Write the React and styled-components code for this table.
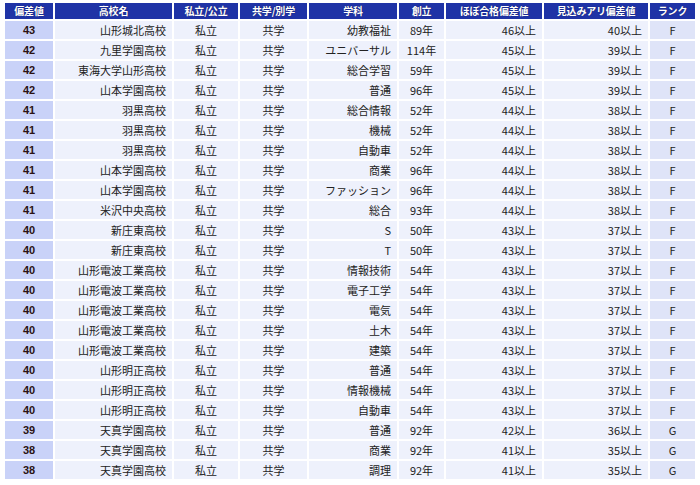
import React from "react";
import styled, { createGlobalStyle } from "styled-components";

const Global = createGlobalStyle`
  html, body { margin: 0; padding: 0; background: #ffffff; }
  body { font-family: "Noto Sans CJK JP", "Liberation Sans", sans-serif; }
`;

const Wrap = styled.div`
  padding: 1px 0 0 3px;
`;

const Table = styled.table`
  border-collapse: separate;
  border-spacing: 2px;
  table-layout: fixed;
  width: 692px;
`;

const HeadCell = styled.th`
  background: #1f33a6;
  color: #ffffff;
  font-size: 10px;
  font-weight: 700;
  height: 16px;
  padding: 0;
  line-height: 16px;
  text-align: center;
  white-space: nowrap;
  text-shadow: 0 0 1px #0a1050;
  letter-spacing: -0.2px;
`;

const Cell = styled.td`
  height: 18px;
  padding: 0 ${(p) => (p.$align === "right" ? "6px" : "0")} 0 0;
  line-height: 18px;
  font-size: 11px;
  color: #222222;
  white-space: nowrap;
  text-align: ${(p) => p.$align || "center"};
  background: ${(p) =>
    p.$kind === "score" ? "#c9d2f8" : p.$kind === "rank" ? "#dfe4f8" : "#eef1fc"};
`;

const Score = styled(Cell)`
  font-weight: 700;
  color: #2b1212;
  font-family: "Liberation Sans", "Noto Sans CJK JP", sans-serif;
  font-size: 11px;
`;

const widths = [48, 117, 64, 67, 88, 45, 96, 104, 45];
const headers = ["偏差値", "高校名", "私立/公立", "共学/別学", "学科", "創立", "ほぼ合格偏差値", "見込みアリ偏差値", "ランク"];

const rows = [
  ["43", "山形城北高校", "幼教福祉", "89年", "46以上", "40以上", "F"],
  ["42", "九里学園高校", "ユニバーサル", "114年", "45以上", "39以上", "F"],
  ["42", "東海大学山形高校", "総合学習", "59年", "45以上", "39以上", "F"],
  ["42", "山本学園高校", "普通", "96年", "45以上", "39以上", "F"],
  ["41", "羽黒高校", "総合情報", "52年", "44以上", "38以上", "F"],
  ["41", "羽黒高校", "機械", "52年", "44以上", "38以上", "F"],
  ["41", "羽黒高校", "自動車", "52年", "44以上", "38以上", "F"],
  ["41", "山本学園高校", "商業", "96年", "44以上", "38以上", "F"],
  ["41", "山本学園高校", "ファッション", "96年", "44以上", "38以上", "F"],
  ["41", "米沢中央高校", "総合", "93年", "44以上", "38以上", "F"],
  ["40", "新庄東高校", "S", "50年", "43以上", "37以上", "F"],
  ["40", "新庄東高校", "T", "50年", "43以上", "37以上", "F"],
  ["40", "山形電波工業高校", "情報技術", "54年", "43以上", "37以上", "F"],
  ["40", "山形電波工業高校", "電子工学", "54年", "43以上", "37以上", "F"],
  ["40", "山形電波工業高校", "電気", "54年", "43以上", "37以上", "F"],
  ["40", "山形電波工業高校", "土木", "54年", "43以上", "37以上", "F"],
  ["40", "山形電波工業高校", "建築", "54年", "43以上", "37以上", "F"],
  ["40", "山形明正高校", "普通", "54年", "43以上", "37以上", "F"],
  ["40", "山形明正高校", "情報機械", "54年", "43以上", "37以上", "F"],
  ["40", "山形明正高校", "自動車", "54年", "43以上", "37以上", "F"],
  ["39", "天真学園高校", "普通", "92年", "42以上", "36以上", "G"],
  ["38", "天真学園高校", "商業", "92年", "41以上", "35以上", "G"],
  ["38", "天真学園高校", "調理", "92年", "41以上", "35以上", "G"],
];

export default function App() {
  return (
    <Wrap>
      <Global />
      <Table>
        <colgroup>
          {widths.map((w, i) => (
            <col key={i} style={{ width: w }} />
          ))}
        </colgroup>
        <thead>
          <tr>
            {headers.map((h) => (
              <HeadCell key={h}>{h}</HeadCell>
            ))}
          </tr>
        </thead>
        <tbody>
          {rows.map((r, i) => (
            <tr key={i}>
              <Score $kind="score">{r[0]}</Score>
              <Cell $align="right">{r[1]}</Cell>
              <Cell>私立</Cell>
              <Cell>共学</Cell>
              <Cell $align="right">{r[2]}</Cell>
              <Cell>{r[3]}</Cell>
              <Cell $align="right">{r[4]}</Cell>
              <Cell $align="right">{r[5]}</Cell>
              <Cell $kind="rank">{r[6]}</Cell>
            </tr>
          ))}
        </tbody>
      </Table>
    </Wrap>
  );
}
